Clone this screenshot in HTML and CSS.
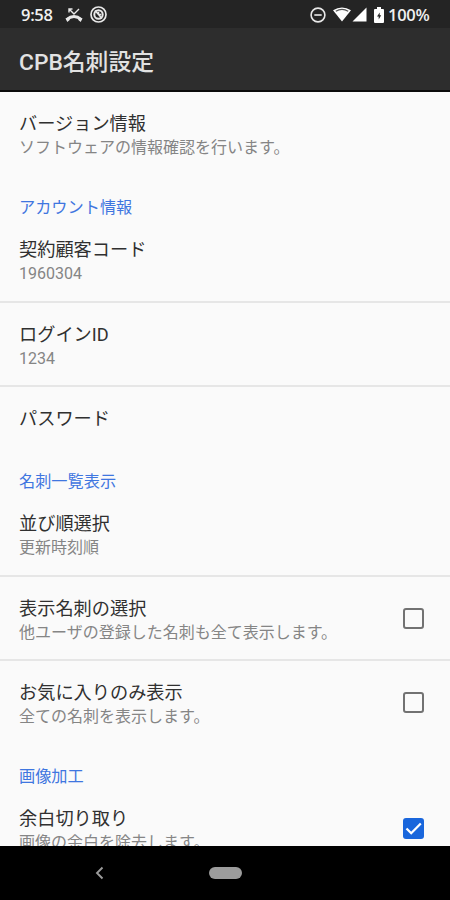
FILE: index.html
```html
<!DOCTYPE html>
<html lang="ja">
<head>
<meta charset="utf-8">
<title>CPB名刺設定</title>
<link rel="stylesheet" href="styles.css">
</head>
<body>
<div class="screen">
  <header class="status">
    <span class="clock">9:58</span>
    <svg class="missed" width="18" height="16" viewBox="0 0 18 16"><path d="M1.600 12.600Q9 6.400 16.400 12.600" fill="none" stroke="#e8e8e8" stroke-width="2.800"/><path d="M.5 11.500l4.200-1.700v3.200l-2.400 2zM17.500 11.500l-4.200-1.700v3.200l2.400 2z" fill="#e8e8e8"/><path d="M4 5.500V2h3.500M4.300 2.300 9 7l5-5" fill="none" stroke="#e8e8e8" stroke-width="1.400"/></svg>
    <svg class="sync" width="17" height="17" viewBox="0 0 17 17" fill="none" stroke="#e8e8e8"><circle cx="8.500" cy="8.500" r="7.500" stroke-width="1.700"/><circle cx="8.500" cy="8.500" r="4.200" stroke-width="2"/><path d="M5 4.500l7 8M8.500 8.500V5.700M8.500 8.500h2.800" stroke-width="1.500"/></svg>
    <span class="spacer"></span>
    <svg class="dnd" width="16" height="16" viewBox="0 0 16 16" fill="none" stroke="#e8e8e8" stroke-width="1.600"><circle cx="8" cy="8" r="6.900"/><path d="M4.300 8h7.400"/></svg>
    <svg class="wifi" width="18" height="15" viewBox="0 0 18 15"><path d="M0 3.300Q9-2.500 18 3.300L9 14.500z" fill="#fff"/><path d="M2.800 4.300Q9 .5 15.200 4.300" fill="none" stroke="#555" stroke-width="1.300"/></svg>
    <svg class="signal" width="15" height="15" viewBox="0 0 15 15"><path d="M14.500.5v14H.5z" fill="#fff"/></svg>
    <svg class="battery" width="10" height="16" viewBox="0 0 10 16"><path d="M3 0h4v2h2q1 0 1 1v12q0 1-1 1H1q-1 0-1-1V3q0-1 1-1h2z" fill="#fff"/><path d="M5.700 5.500 3 9.400h1.700v3l2.500-4.100H5.700z" fill="#252525"/></svg>
    <span class="percent">100%</span>
  </header>
  <h1 class="appbar">CPB名刺設定</h1>
  <main class="list">
    <section class="group">
      <div class="row"><div class="title">バージョン情報</div><div class="summary">ソフトウェアの情報確認を行います。</div></div>
    </section>
    <section class="group">
      <h2 class="category">アカウント情報</h2>
      <div class="row"><div class="title">契約顧客コード</div><div class="summary">1960304</div></div>
      <div class="row"><div class="title">ログインID</div><div class="summary">1234</div></div>
      <div class="row single"><div class="title">パスワード</div></div>
    </section>
    <section class="group">
      <h2 class="category">名刺一覧表示</h2>
      <div class="row"><div class="title">並び順選択</div><div class="summary">更新時刻順</div></div>
      <div class="row option"><div><div class="title">表示名刺の選択</div><div class="summary">他ユーザの登録した名刺も全て表示します。</div></div><span class="box"></span></div>
      <div class="row option"><div><div class="title">お気に入りのみ表示</div><div class="summary">全ての名刺を表示します。</div></div><span class="box"></span></div>
    </section>
    <section class="group">
      <h2 class="category">画像加工</h2>
      <div class="row option"><div><div class="title">余白切り取り</div><div class="summary">画像の余白を除去します。</div></div><span class="box checked"><svg width="21" height="21" viewBox="0 0 21 21"><path d="M3.500 10.500l4.700 4.700L17.800 5.500" fill="none" stroke="#fff" stroke-width="2.300"/></svg></span></div>
    </section>
  </main>
  <nav class="nav">
    <svg class="back" width="9" height="14" viewBox="0 0 9 14"><path d="M7.500 1.500 2 7l5.500 5.500" fill="none" stroke="#9c9c9c" stroke-width="1.900"/></svg>
    <span class="home"></span>
  </nav>
</div>
</body>
</html>
```
FILE: styles.css
```css
* { box-sizing: border-box; }
body { margin: 0; font-family: Roboto, "Noto Sans CJK JP", sans-serif; }
.screen { width: 450px; height: 900px; display: flex; flex-direction: column; overflow: hidden; background: #fafafa; }
.status { flex: none; height: 28px; background: #242424; color: #f0f0f0; display: flex; align-items: center; padding: 1px 20px 0 21px; font: 600 16.5px/28px "Open Sans", Roboto, sans-serif; }
.clock { width: 33px; letter-spacing: -0.3px; white-space: nowrap; }
.missed { margin-left: 11px; }
.sync { margin-left: 7px; }
.spacer { flex: 1; }
.wifi { margin-left: 7px; }
.signal { margin-left: 1px; }
.battery { margin-left: 7px; }
.percent { width: 42px; margin-left: 4px; letter-spacing: -0.3px; white-space: nowrap; }
.appbar { flex: none; height: 64px; margin: 0; padding-left: 19px; background: #2d2d2d; border-bottom: 2px solid #0c0c0c; color: #e2e2e2; font-size: 22.8px; line-height: 69px; font-weight: 500; }
.list { flex: 1; min-height: 0; overflow: hidden; }
.category { margin: 0; height: 41.5px; padding: 19px 19px 0; color: #3f76e0; font-size: 16.2px; line-height: 23px; font-weight: 400; }
.row { height: 84.5px; padding: 20px 19px 0; border-bottom: 2px solid #e6e6e6; }
.row:last-child { border-bottom: 0; }
.row.single { height: 63.5px; }
.title { color: #303030; font-size: 18.2px; line-height: 24px; }
.summary { color: #858585; font-size: 16px; line-height: 23px; }
.option { display: flex; justify-content: space-between; padding-right: 26px; }
.box { width: 21px; height: 21px; margin-top: 11px; border: 2px solid #727272; border-radius: 3px; }
.box.checked { border: 0; background: #1966dc; }
.box svg { display: block; }
.nav { flex: none; height: 54px; background: #000; display: flex; align-items: center; padding-left: 95px; }
.home { width: 33px; height: 12px; margin-left: 105px; border-radius: 6px; background: #9c9c9c; }
```
